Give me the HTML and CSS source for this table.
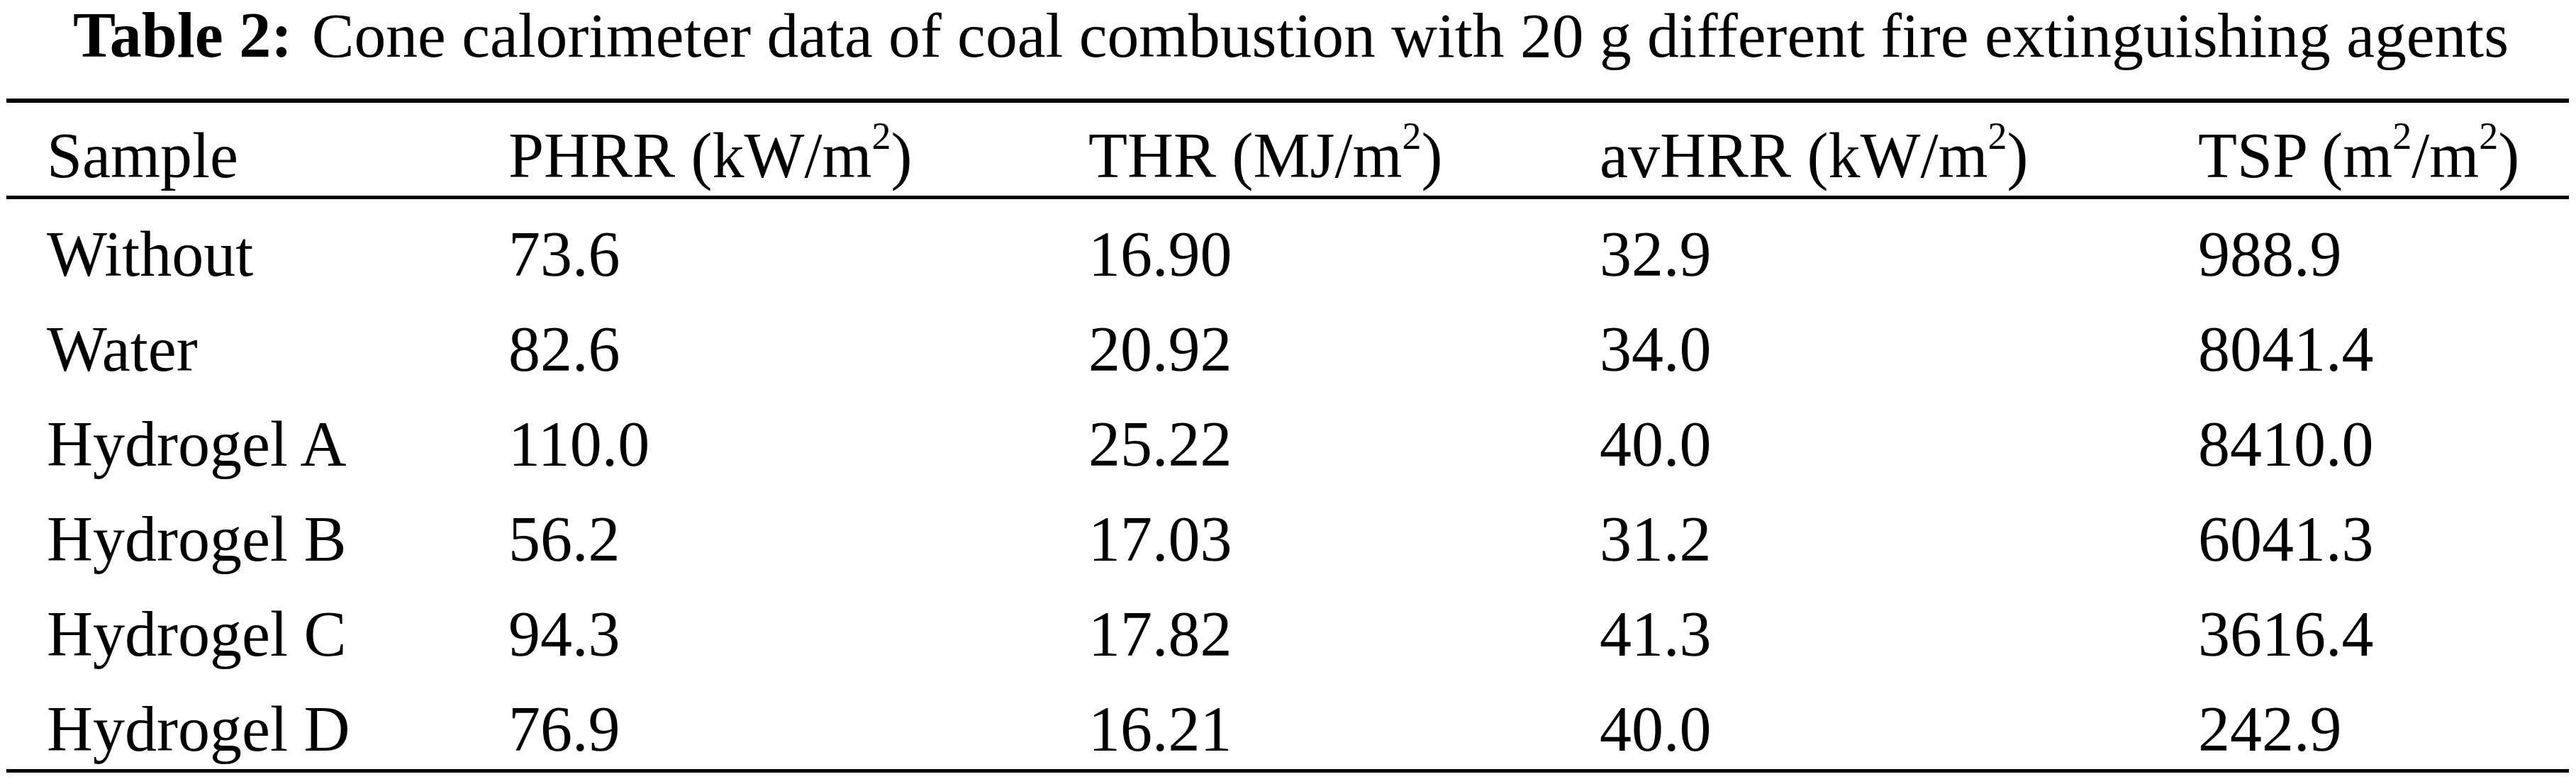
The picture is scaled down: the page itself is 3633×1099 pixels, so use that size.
FILE: index.html
```html
<!DOCTYPE html>
<html lang="en">
<head>
<meta charset="utf-8">
<title>Table 2</title>
<link rel="stylesheet" href="styles.css">
</head>
<body>
<div class="page">
  <h1 class="caption"><span class="label">Table 2:</span> Cone calorimeter data of coal combustion with 20 g different fire extinguishing agents</h1>
  <div class="table">
    <div class="row head">
      <div class="cell">Sample</div>
      <div class="cell">PHRR (kW/m<sup>2</sup>)</div>
      <div class="cell">THR (MJ/m<sup>2</sup>)</div>
      <div class="cell">avHRR (kW/m<sup>2</sup>)</div>
      <div class="cell">TSP (m<sup>2</sup>/m<sup>2</sup>)</div>
    </div>
    <div class="body">
      <div class="row">
        <div class="cell">Without</div><div class="cell">73.6</div><div class="cell">16.90</div><div class="cell">32.9</div><div class="cell">988.9</div>
      </div>
      <div class="row">
        <div class="cell">Water</div><div class="cell">82.6</div><div class="cell">20.92</div><div class="cell">34.0</div><div class="cell">8041.4</div>
      </div>
      <div class="row">
        <div class="cell">Hydrogel A</div><div class="cell">110.0</div><div class="cell">25.22</div><div class="cell">40.0</div><div class="cell">8410.0</div>
      </div>
      <div class="row">
        <div class="cell">Hydrogel B</div><div class="cell">56.2</div><div class="cell">17.03</div><div class="cell">31.2</div><div class="cell">6041.3</div>
      </div>
      <div class="row">
        <div class="cell">Hydrogel C</div><div class="cell">94.3</div><div class="cell">17.82</div><div class="cell">41.3</div><div class="cell">3616.4</div>
      </div>
      <div class="row">
        <div class="cell">Hydrogel D</div><div class="cell">76.9</div><div class="cell">16.21</div><div class="cell">40.0</div><div class="cell">242.9</div>
      </div>
    </div>
  </div>
</div>
</body>
</html>
```

FILE: styles.css
```css
html, body {
  margin: 0;
  padding: 0;
  background: #ffffff;
}

.page {
  width: 3633px;
  height: 1099px;
  font-family: "Liberation Serif", "Times New Roman", serif;
  font-size: 90px;
  color: #000000;
  overflow: hidden;
}

.caption {
  margin: 0 0 39px 103px;
  font-size: 89.6px;
  font-weight: normal;
  line-height: 100px;
  white-space: nowrap;
}

.caption .label {
  font-size: 90px;
  font-weight: bold;
  margin-right: 5px;
}

.table {
  margin-left: 9px;
  width: 3614px;
  border-top: 6px solid #000;
  border-bottom: 5px solid #000;
}

.row {
  display: grid;
  grid-template-columns: 651px 818px 721px 844px 1fr;
  padding-left: 57px;
  padding-top: 21px;
  line-height: 113px;
  white-space: nowrap;
}

.row.head {
  padding-top: 19px;
  line-height: 112px;
  border-bottom: 5px solid #000;
}

.cell sup {
  font-size: 0.6em;
  line-height: 0;
  vertical-align: 0.75em;
}
```
